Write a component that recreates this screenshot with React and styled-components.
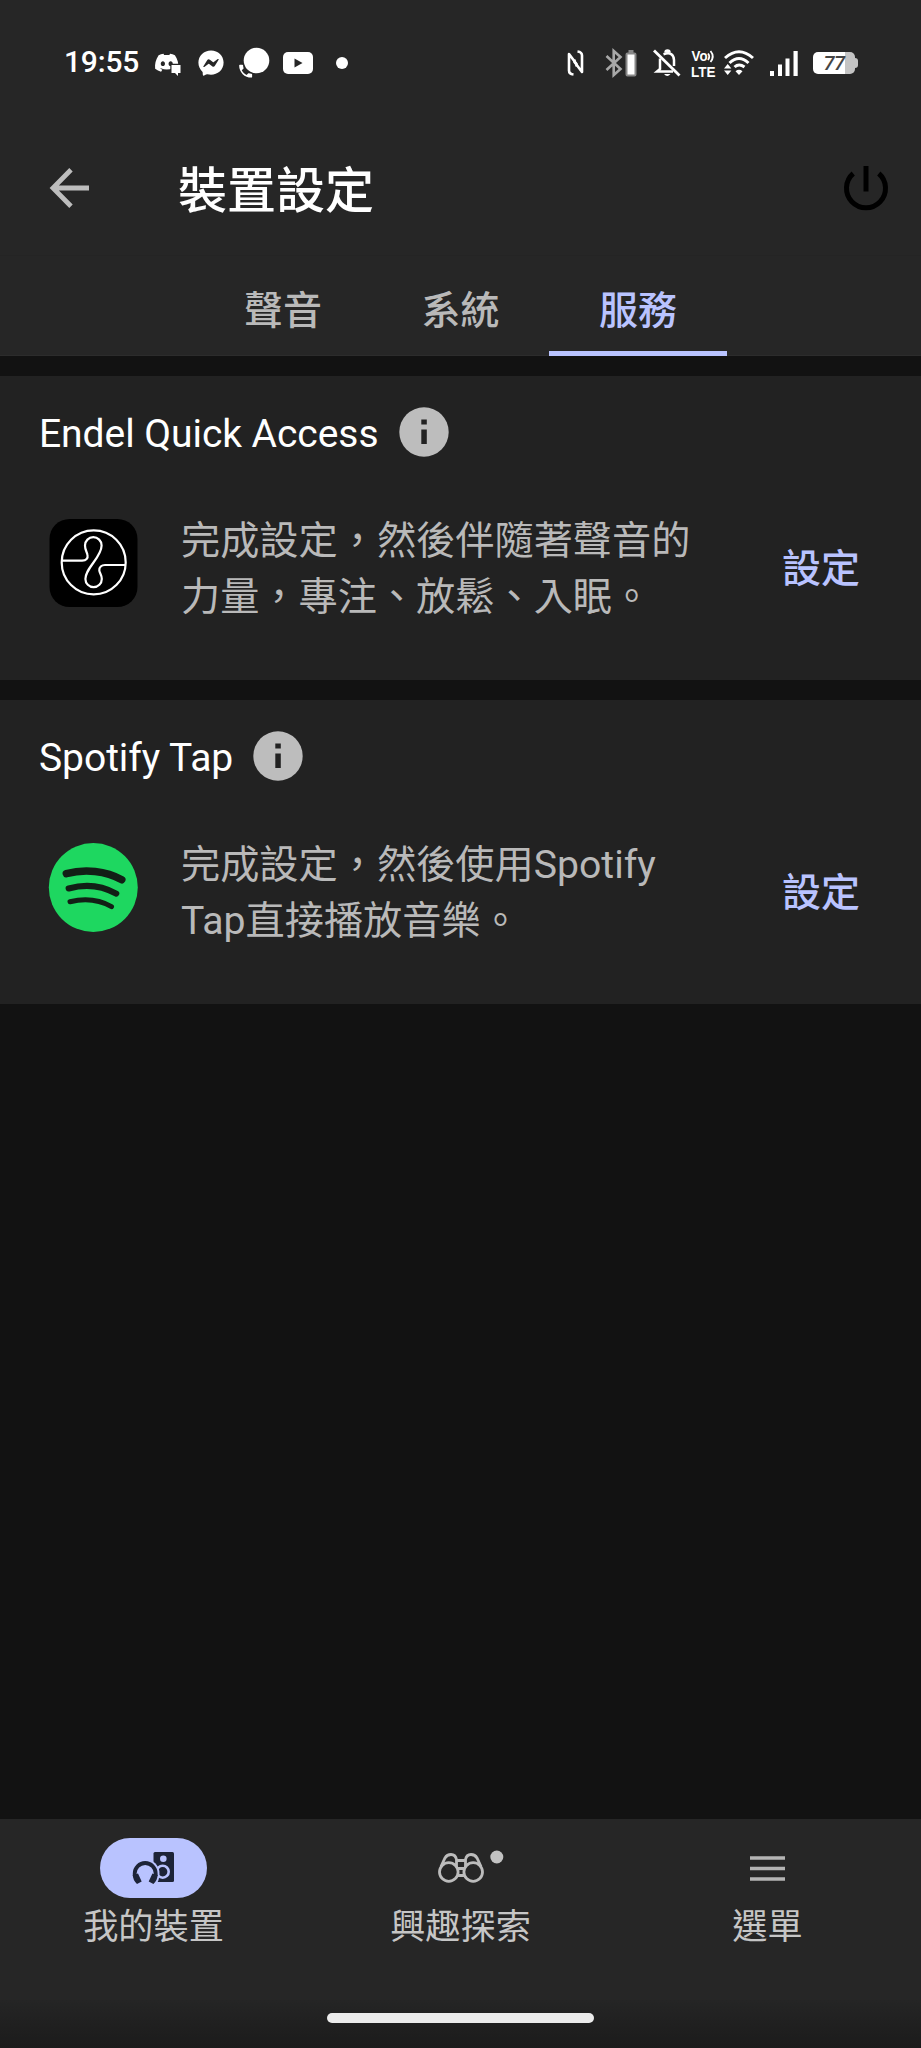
import React from 'react';
import styled, { createGlobalStyle } from 'styled-components';
import { FaDiscord, FaFacebookMessenger } from 'react-icons/fa';

const COLORS = {
  background: '#121212',
  bar: '#262626',
  card: '#222222',
  text: '#ffffff',
  muted: '#b9b9b9',
  label: '#c6c6c6',
  accent: '#b9c3ff',
};

const GlobalStyle = createGlobalStyle`
  *, *::before, *::after {
    box-sizing: border-box;
  }
  body {
    margin: 0;
    background: ${COLORS.background};
    font-family: Roboto, 'Noto Sans CJK TC', sans-serif;
  }
  svg {
    display: block;
    flex-shrink: 0;
    overflow: visible;
  }
  button {
    border: none;
    background: none;
    padding: 0;
    font-family: inherit;
  }
`;

const Screen = styled.div`
  display: flex;
  flex-direction: column;
  width: 921px;
  height: 2048px;
  background: ${COLORS.background};
`;

/* Status bar */

const StatusBar = styled.div`
  display: flex;
  justify-content: space-between;
  align-items: center;
  height: 126px;
  padding: 0 63px 0 64px;
  background: ${COLORS.bar};
  color: ${COLORS.text};
`;

const StatusGroup = styled.div`
  display: flex;
  align-items: center;
`;

const StatusItem = styled.span`
  display: flex;
  margin-left: ${(p) => p.$gap || 0}px;
`;

const Time = styled.span`
  width: 75px;
  font-size: 30px;
  font-weight: 500;
  letter-spacing: -0.2px;
  line-height: 30px;
  white-space: nowrap;
  margin-top: -2px;
`;

const Dot = styled.span`
  width: 12px;
  height: 12px;
  border-radius: 50%;
  background: ${COLORS.text};
`;

const Battery = styled.span`
  display: flex;
  align-items: center;
  &::after {
    content: '';
    width: 3px;
    height: 10px;
    border-radius: 0 3px 3px 0;
    background: #c4c4c4;
  }
`;

const BatteryLevel = styled.span`
  width: 42px;
  height: 22px;
  border-radius: 5px;
  background: linear-gradient(90deg, #fff 77%, #c4c4c4 77%);
  color: #444;
  font-size: 20px;
  font-weight: 500;
  font-style: italic;
  letter-spacing: -0.5px;
  line-height: 23px;
  text-align: center;
`;

const DiscordIcon = () => (
  <svg width="28" height="26" viewBox="0 0 28 26">
    <FaDiscord size={25.5} />
    <path
      d="M17.5 15h9v8h-2.500v3l-3-3h-3.500z"
      fill="#fff"
      stroke={COLORS.bar}
      strokeWidth="2.400"
      paintOrder="stroke"
    />
  </svg>
);

const CallChatIcon = () => (
  <svg width="30" height="32" viewBox="0 0 30 32">
    <circle cx="17.500" cy="13.500" r="12.800" fill="#fff" />
    <path d="M9 22 14 25.500 19 24z" fill="#fff" />
    <path
      transform="translate(-2 15.500) scale(0.72)"
      d="M6.620 10.790c1.440 2.830 3.760 5.140 6.590 6.590l2.200-2.200c.27-.27.67-.36 1.020-.24 1.120.37 2.330.57 3.570.57.55 0 1 .45 1 1V20c0 .55-.45 1-1 1-9.390 0-17-7.610-17-17 0-.55.45-1 1-1h3.500c.55 0 1 .45 1 1 0 1.250.2 2.450.57 3.570.11.35.03.74-.25 1.020l-2.200 2.200z"
      fill="#fff"
      stroke={COLORS.bar}
      strokeWidth="3.500"
      paintOrder="stroke"
    />
  </svg>
);

const YoutubeIcon = () => (
  <svg width="30" height="22" viewBox="0 0 30 22">
    <rect width="30" height="22" rx="5" fill="#fff" />
    <path d="M11.5 6.5 19.5 11l-8 4.5z" fill={COLORS.bar} />
  </svg>
);

const NfcIcon = () => (
  <svg
    width="18"
    height="26"
    viewBox="0 0 18 26"
    fill="none"
    stroke="#fff"
    strokeWidth="2.600"
    strokeLinejoin="round"
  >
    <path d="M6.500 24.500Q2 24 2 20.500V4L9.500 14V16.500" />
    <path d="M10.500 1.500Q15 2 15 5.500V22L7.500 12V9.500" />
  </svg>
);

const BluetoothIcon = () => (
  <svg width="31" height="28" viewBox="0 0 31 28">
    <path
      d="M1.5 7 15.5 20 8.700 26V2l6.800 6L1.500 21"
      fill="none"
      stroke="#a8a8a8"
      strokeWidth="2.600"
    />
    <rect x="23.500" y="1" width="5" height="3" fill="#888" />
    <rect x="21.500" y="4.500" width="9" height="22" rx="1" fill="#fff" stroke="#888" strokeWidth="2" />
  </svg>
);

const BellOffIcon = () => (
  <svg
    width="28"
    height="28"
    viewBox="0 0 28 28"
    fill="none"
    stroke="#fff"
    strokeWidth="2.5"
  >
    <path d="M1 1.5 26.5 26.5" strokeWidth="2.8" />
    <path d="M10.500 5.200Q20.500 2 21 11V17" />
    <path d="M7 9.500V20L4 22.500H20" />
    <path d="M12.500 3.500a2 2 0 0 1 4 0" fill="#fff" />
    <path d="M11 25h6.500q-3.200 4-6.500 0z" fill="#fff" stroke="none" />
  </svg>
);

const VolteIcon = () => (
  <svg width="25" height="27" viewBox="0 0 25 27">
    <g fill="#fff" fontFamily="Liberation Sans, sans-serif" fontWeight="700">
      <text x="0.500" y="11" fontSize="14" textLength="16" lengthAdjust="spacingAndGlyphs">Vo</text>
      <text x="0" y="26.500" fontSize="15.500" textLength="24.500" lengthAdjust="spacingAndGlyphs">LTE</text>
    </g>
    <path
      d="M17 3.500q2.500 3 0 6.500M19.500 1q4.500 5.500 0 11"
      fill="none"
      stroke="#fff"
      strokeWidth="1.800"
    />
  </svg>
);

const WifiIcon = () => (
  <svg width="30" height="26" viewBox="0 0 30 26">
    <g fill="none" stroke="#fff" strokeWidth="3">
      <path d="M1 8Q15-4.500 29 8" />
      <path d="M5.500 13Q15 4 24.500 13" />
      <path d="M10.500 17Q15 13 20.500 17" />
    </g>
    <path d="M11.500 21.200q3.500-2.800 7 0L15 25z" fill="#fff" />
    <path d="M3.700 14 7.400 18.500H0zM3.700 25 7.400 20.500H0z" fill="#fff" />
  </svg>
);

const SignalIcon = () => (
  <svg width="28" height="25" viewBox="0 0 28 25" fill="#fff">
    <rect x="0" y="20" width="4" height="5" />
    <rect x="8" y="13.500" width="4" height="11.500" />
    <rect x="15.500" y="7.500" width="4" height="17.500" />
    <rect x="23.500" y="0" width="4.200" height="25" />
  </svg>
);

/* App bar */

const AppBar = styled.header`
  display: flex;
  align-items: center;
  height: 130px;
  padding: 0 32px 0 49px;
  background: ${COLORS.bar};
  border-bottom: 1px solid #242424;
`;

const IconButton = styled.button`
  display: flex;
  margin-bottom: 6px;
`;

const Title = styled.h1`
  flex: 1;
  margin: 2px 0 0 88px;
  color: ${COLORS.text};
  font-size: 49px;
  font-weight: 500;
  line-height: 60px;
`;

/* Tabs */

const Tabs = styled.nav`
  display: flex;
  justify-content: center;
  height: 100px;
  background: ${COLORS.bar};
  border-bottom: 1px solid #2c2c2c;
`;

const Tab = styled.button`
  width: 177.500px;
  height: 100px;
  padding-top: 6px;
  border-bottom: 5px solid ${(p) => (p.$active ? COLORS.accent : 'transparent')};
  color: ${(p) => (p.$active ? COLORS.accent : COLORS.muted)};
  font-size: 39px;
  font-weight: 500;
`;

/* Service cards */

const Content = styled.main`
  display: flex;
  flex-direction: column;
  flex: 1;
  gap: 20px;
  padding-top: 20px;
`;

const Card = styled.section`
  height: 304px;
  padding: 31px 39px 0;
  background: ${COLORS.card};
`;

const CardHeader = styled.div`
  display: flex;
  align-items: center;
  gap: 20px;
  height: 50px;
`;

const CardTitle = styled.h2`
  margin: 0;
  padding-top: 4px;
  color: ${COLORS.text};
  font-size: 39px;
  font-weight: 400;
  letter-spacing: -0.050px;
  line-height: 46px;
`;

const CardBody = styled.div`
  display: flex;
  align-items: flex-start;
  margin-top: 54px;
  padding-left: 10px;
`;

const Logo = styled.div`
  display: flex;
  margin-top: 8px;
`;

const Description = styled.p`
  width: 520px;
  margin: 2px 0 0 43px;
  color: ${COLORS.muted};
  font-size: 39.200px;
  line-height: 56px;
`;

const SetupButton = styled.button`
  margin: 30px 0 0 81px;
  color: ${COLORS.accent};
  font-size: 39px;
  font-weight: 500;
  line-height: 56px;
  white-space: nowrap;
`;

const InfoIcon = () => (
  <svg width="50" height="50" viewBox="0 0 50 50">
    <circle cx="25" cy="25" r="24.700" fill="#bdbdbd" />
    <path d="M22.300 12.500h5.500v5h-5.500zM22.300 22.500h5.500v14.500h-5.500z" fill={COLORS.card} />
  </svg>
);

const EndelLogo = () => (
  <svg width="89" height="89" viewBox="0 0 89 89">
    <rect x="0.500" y="0" width="88" height="88" rx="20" fill="#000" />
    <g fill="none" stroke="#fff" strokeWidth="2.200">
      <circle cx="44.700" cy="43.400" r="32" />
      <path d="M12.500 41.700H33Q39.500 41 38.500 36C38 33 36 31 36 26.500A8.300 8.300 0 0 1 52.600 26.500C52.600 31 50 36 44.500 43.500C39 51 36.400 55 36.400 60A8.200 8.200 0 0 0 52.800 60C52.800 56 50.500 54 50.300 51.500C50 48 52.500 46 56 46H76.500" />
    </g>
  </svg>
);

const SpotifyLogo = () => (
  <svg width="89" height="89" viewBox="0 0 89 89">
    <circle cx="44.300" cy="44.500" r="44.500" fill="#1ed760" />
    <g fill="none" stroke="#121f16" strokeLinecap="round">
      <path d="M17.300 30.600C36 25.500 57 27.800 72.800 36.700" strokeWidth="7.500" />
      <path d="M19.700 45.400C36 40.900 53 42.600 67.200 50.600" strokeWidth="6.200" />
      <path d="M21 58.700C36 55.200 50 56.500 62.500 63.700" strokeWidth="5" />
    </g>
  </svg>
);

/* Bottom navigation */

const BottomNav = styled.nav`
  display: grid;
  grid-template-columns: repeat(3, 1fr);
  height: 181px;
  padding-top: 19px;
  background: ${COLORS.bar};
`;

const NavItem = styled.button`
  display: flex;
  flex-direction: column;
  align-items: center;
  color: ${COLORS.label};
  font-size: 35.200px;
  line-height: 52px;
`;

const NavIcon = styled.span`
  display: flex;
  align-items: center;
  justify-content: center;
  width: 107px;
  height: 60px;
  margin-bottom: 3px;
  border-radius: 30px;
  background: ${(p) => (p.$active ? COLORS.accent : 'transparent')};
`;

const GestureArea = styled.div`
  display: flex;
  justify-content: center;
  height: 48px;
  padding-top: 13px;
  background: linear-gradient(#252525, #1b1b1b);
`;

const GestureBar = styled.div`
  width: 267px;
  height: 10px;
  border-radius: 5px;
  background: #ececec;
`;

const DevicesIcon = () => (
  <svg width="43" height="34" viewBox="0 0 43 34">
    <rect x="21.500" y="1" width="20.500" height="30" rx="1.500" fill="#1d2438" />
    <circle cx="31.300" cy="7.700" r="3.300" fill={COLORS.accent} />
    <circle cx="30.700" cy="20.700" r="6" fill="#1d2438" stroke={COLORS.accent} strokeWidth="2.600" />
    <path d="M13 8A14.500 14.500 0 0 1 27.500 22.500Q27.500 29 24 34H13z" fill={COLORS.accent} />
    <path d="M2.700 25V22.500A10.500 10.500 0 0 1 23.700 22.500V25" fill="none" stroke="#1d2438" strokeWidth="3.800" />
    <path
      d="M0.800 24 6 22.500 9.700 30.500 5 33Q0.800 29 0.800 24zM25.600 24 20.400 22.500 16.700 30.500 21.400 33Q25.600 29 25.600 24z"
      fill="#1d2438"
    />
  </svg>
);

const ExploreIcon = () => (
  <svg width="46" height="32" viewBox="0 0 46 32" fill="none" stroke="#bcbcbc" strokeWidth="2.800">
    <circle cx="10.800" cy="20" r="9.300" />
    <circle cx="35.200" cy="20" r="9.300" />
    <path d="M3 14.500 7 6Q9 2.500 13 2.500Q17.500 2.500 18.500 7.500V15" />
    <path d="M43 14.500 39 6Q37 2.500 33 2.500Q28.500 2.500 27.500 7.500V15" />
    <path d="M18.500 8.500H27.500M20 16.500H26M20 23.500H26" />
    <circle cx="58.800" cy="5" r="6.500" fill="#c2c2c2" stroke="none" />
  </svg>
);

const MenuIcon = () => (
  <svg width="35" height="25" viewBox="0 0 35 25" stroke="#b4b4b4" strokeWidth="3.300">
    <path d="M0 2H35M0 12.500H35M0 23H35" />
  </svg>
);

const TABS = ['聲音', '系統', '服務'];

const SERVICES = [
  {
    name: 'Endel Quick Access',
    lines: ['完成設定,然後伴隨著聲音的', '力量,專注、放鬆、入眠。'],
    logo: EndelLogo,
  },
  {
    name: 'Spotify Tap',
    lines: ['完成設定,然後使用Spotify', 'Tap直接播放音樂。'],
    logo: SpotifyLogo,
  },
];

const NAV_ITEMS = [
  { label: '我的裝置', icon: DevicesIcon },
  { label: '興趣探索', icon: ExploreIcon },
  { label: '選單', icon: MenuIcon },
];

// full-width comma, as Chinese text is set
const withWideComma = (line) => line.replace(',', '\uFF0C');

const ServiceCard = ({ name, lines, logo: ServiceLogo }) => (
  <Card>
    <CardHeader>
      <CardTitle>{name}</CardTitle>
      <InfoIcon />
    </CardHeader>
    <CardBody>
      <Logo>
        <ServiceLogo />
      </Logo>
      <Description>
        {withWideComma(lines[0])}
        <br />
        {withWideComma(lines[1])}
      </Description>
      <SetupButton>設定</SetupButton>
    </CardBody>
  </Card>
);

const App = () => (
  <>
    <GlobalStyle />
    <Screen lang="zh-Hant">
      <StatusBar>
        <StatusGroup>
          <Time>19:55</Time>
          <StatusItem $gap={15}><DiscordIcon /></StatusItem>
          <StatusItem $gap={16}><FaFacebookMessenger size={26} /></StatusItem>
          <StatusItem $gap={15}><CallChatIcon /></StatusItem>
          <StatusItem $gap={14}><YoutubeIcon /></StatusItem>
          <StatusItem $gap={23}><Dot /></StatusItem>
        </StatusGroup>
        <StatusGroup>
          <StatusItem><NfcIcon /></StatusItem>
          <StatusItem $gap={20}><BluetoothIcon /></StatusItem>
          <StatusItem $gap={17}><BellOffIcon /></StatusItem>
          <StatusItem $gap={10}><VolteIcon /></StatusItem>
          <StatusItem $gap={8}><WifiIcon /></StatusItem>
          <StatusItem $gap={16}><SignalIcon /></StatusItem>
          <StatusItem $gap={15}>
            <Battery>
              <BatteryLevel>77</BatteryLevel>
            </Battery>
          </StatusItem>
        </StatusGroup>
      </StatusBar>
      <AppBar>
        <IconButton aria-label="返回">
          <svg width="41" height="40" viewBox="0 0 41 40" fill="none" stroke="#bdbdbd" strokeWidth="4.800">
            <path d="M22 1.800 4 20 22 38.200M4 20H40" />
          </svg>
        </IconButton>
        <Title>裝置設定</Title>
        <IconButton aria-label="電源">
          <svg width="46" height="46" viewBox="0 0 46 46" fill="none" stroke="#000" strokeWidth="5">
            <path d="M10.200 8.500A19.500 19.500 0 1 0 35.800 8.500M23 1V26.500" />
          </svg>
        </IconButton>
      </AppBar>
      <Tabs>
        {TABS.map((tab) => (
          <Tab key={tab} $active={tab === '服務'}>
            {tab}
          </Tab>
        ))}
      </Tabs>
      <Content>
        {SERVICES.map((service) => (
          <ServiceCard key={service.name} {...service} />
        ))}
      </Content>
      <BottomNav>
        {NAV_ITEMS.map(({ label, icon: ItemIcon }, index) => (
          <NavItem key={label}>
            <NavIcon $active={index === 0}>
              <ItemIcon />
            </NavIcon>
            {label}
          </NavItem>
        ))}
      </BottomNav>
      <GestureArea>
        <GestureBar />
      </GestureArea>
    </Screen>
  </>
);

export default App;
